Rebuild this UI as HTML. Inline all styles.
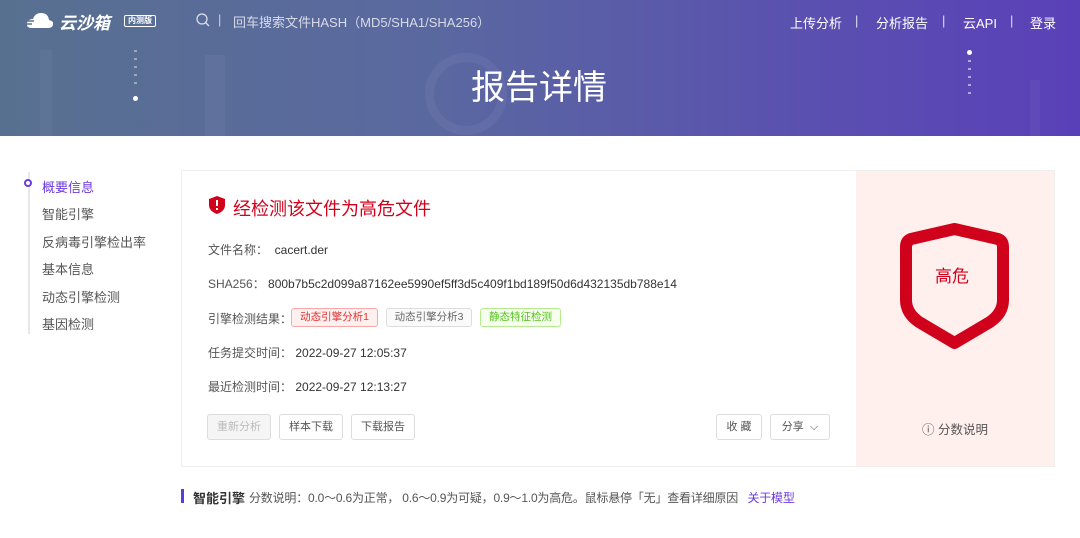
<!DOCTYPE html>
<html><head><meta charset="utf-8"><style>
*{margin:0;padding:0;box-sizing:border-box}
body{width:1080px;height:538px;background:#fff;font-family:"Liberation Sans","Noto Sans CJK SC",sans-serif;position:relative;overflow:hidden;color:#333}
.hdr{position:absolute;left:0;top:0;width:1080px;height:136px;background:linear-gradient(90deg,#587090 0%,#5a68a0 40%,#5a50b0 75%,#5a40b8 100%)}
.a{position:absolute}
.t{position:absolute;white-space:nowrap}
.nav{font-size:13px;color:#555}
.btn{position:absolute;height:26px;border:1px solid #ddd;border-radius:3px;font-size:11px;color:#555;text-align:center;line-height:24px;background:#fff}
.tag{position:absolute;height:19px;border-radius:3px;font-size:10.5px;line-height:17px;text-align:center}
.lbl{font-size:12px;color:#555}
.hn{position:absolute;top:13px;font-size:13px;color:#fff;white-space:nowrap}
</style></head><body>
<div class="hdr">
 <div class="a" style="left:40px;top:50px;width:12px;height:86px;background:rgba(255,255,255,.04)"></div>
 <div class="a" style="left:205px;top:55px;width:20px;height:81px;background:rgba(255,255,255,.04)"></div>
 <div class="a" style="left:1030px;top:80px;width:10px;height:56px;background:rgba(255,255,255,.04)"></div>
 <div class="a" style="left:425px;top:53px;width:82px;height:82px;border-radius:50%;border:9px solid rgba(255,255,255,.05)"></div>
 <div class="a" style="left:134px;top:50px;width:3px;height:40px;background:repeating-linear-gradient(#fff6 0 2px,transparent 2px 8px)"></div>
 <div class="a" style="left:133px;top:96px;width:5px;height:5px;border-radius:50%;background:#fff"></div>
 <div class="a" style="left:967px;top:50px;width:5px;height:5px;border-radius:50%;background:#fff"></div>
 <div class="a" style="left:968px;top:60px;width:3px;height:40px;background:repeating-linear-gradient(#fff8 0 2px,transparent 2px 8px)"></div>
 <svg class="a" style="left:26px;top:11px" width="28" height="18" viewBox="0 0 28 18"><path d="M6 17 Q0 17 1 12 Q2 8 7 8 Q9 2 15 2 Q22 2 23 9 Q28 10 27 14 Q26 17 22 17Z" fill="#fff"/><path d="M0 10h8M0 13h6" stroke="#587090" stroke-width="1.5"/></svg>
 <div class="t" style="left:59px;top:9px;font-size:17px;font-weight:bold;font-style:italic;color:#fff">云沙箱</div>
 <div class="t" style="left:124px;top:15px;font-size:8px;color:#fff;border:1px solid #fff;border-radius:2px;padding:0 3px;line-height:10px;font-weight:bold">内测版</div>
 <svg class="a" style="left:196px;top:13px" width="14" height="14" viewBox="0 0 14 14"><circle cx="6" cy="6" r="5" fill="none" stroke="#dde" stroke-width="1.3"/><path d="M9.5 9.5l3.5 3.5" stroke="#dde" stroke-width="1.3"/></svg>
 <div class="t" style="left:218px;top:12px;font-size:13px;color:#ccd">|</div>
 <div class="t" style="left:233px;top:12px;font-size:13px;color:#d8dae8">回车搜索文件HASH（MD5/SHA1/SHA256）</div>
 <div class="hn" style="left:790px">上传分析</div>
 <div class="hn" style="left:855px;color:#dde">|</div>
 <div class="hn" style="left:876px">分析报告</div>
 <div class="hn" style="left:942px;color:#dde">|</div>
 <div class="hn" style="left:963px">云API</div>
 <div class="hn" style="left:1010px;color:#dde">|</div>
 <div class="hn" style="left:1030px">登录</div>
 <div class="t" style="left:471px;top:60px;font-size:34px;color:#fff">报告详情</div>
</div>
<div class="a" style="left:28px;top:172px;width:2px;height:162px;background:#e8e8e8"></div>
<div class="a" style="left:24px;top:179px;width:8px;height:8px;border-radius:50%;border:2px solid #6a3be0;background:#fff"></div>
<div class="t nav" style="left:42px;top:177px;color:#6a3be0">概要信息</div>
<div class="t nav" style="left:42px;top:204px">智能引擎</div>
<div class="t nav" style="left:42px;top:232px">反病毒引擎检出率</div>
<div class="t nav" style="left:42px;top:259px">基本信息</div>
<div class="t nav" style="left:42px;top:287px">动态引擎检测</div>
<div class="t nav" style="left:42px;top:314px">基因检测</div>
<div class="a" style="left:181px;top:170px;width:874px;height:297px;border:1px solid #eee;background:#fff"></div>
<div class="a" style="left:856px;top:171px;width:198px;height:295px;background:#fff0ee"></div>
<svg class="a" style="left:209px;top:196px" width="16" height="18" viewBox="0 0 16 18"><path d="M8 0L16 3V9Q16 15 8 18Q0 15 0 9V3Z" fill="#d0021b"/><rect x="7" y="4" width="2" height="6" fill="#fff"/><rect x="7" y="12" width="2" height="2" fill="#fff"/></svg>
<div class="t" style="left:233px;top:195px;font-size:18px;color:#d0021b">经检测该文件为高危文件</div>
<div class="t lbl" style="left:208px;top:241px">文件名称：&nbsp; <span style="color:#333">cacert.der</span></div>
<div class="t lbl" style="left:208px;top:275px">SHA256：&nbsp;<span style="color:#333">800b7b5c2d099a87162ee5990ef5ff3d5c409f1bd189f50d6d432135db788e14</span></div>
<div class="t lbl" style="left:208px;top:310px">引擎检测结果：</div>
<div class="tag" style="left:291px;top:308px;width:87px;border:1px solid #f8a8a8;background:#fff0f0;color:#e03030">动态引擎分析1</div>
<div class="tag" style="left:386px;top:308px;width:86px;border:1px solid #ddd;background:#fafafa;color:#666">动态引擎分析3</div>
<div class="tag" style="left:480px;top:308px;width:81px;border:1px solid #b7eb8f;background:#f6ffed;color:#52c41a">静态特征检测</div>
<div class="t lbl" style="left:208px;top:344px">任务提交时间：&nbsp;<span style="color:#333">2022-09-27 12:05:37</span></div>
<div class="t lbl" style="left:208px;top:378px">最近检测时间：&nbsp;<span style="color:#333">2022-09-27 12:13:27</span></div>
<div class="btn" style="left:207px;top:414px;width:64px;background:#f5f5f5;color:#bbb">重新分析</div>
<div class="btn" style="left:279px;top:414px;width:64px">样本下载</div>
<div class="btn" style="left:351px;top:414px;width:64px">下载报告</div>
<div class="btn" style="left:716px;top:414px;width:46px">收 藏</div>
<div class="btn" style="left:770px;top:414px;width:60px">分享 &nbsp;⌵</div>
<svg class="a" style="left:900px;top:223px" width="109" height="128" viewBox="0 0 109 128"><path d="M54.5 6L98 16Q103 18 103 24V77Q103 90 90 99L54.5 120L19 99Q6 90 6 77V24Q6 18 11 16Z" fill="none" stroke="#d0021b" stroke-width="12" stroke-linejoin="round"/></svg>
<div class="t" style="left:935px;top:262px;font-size:17px;color:#d0021b">高危</div>
<div class="t" style="left:922px;top:419px;font-size:12.5px;color:#555">ⓘ 分数说明</div>
<div class="a" style="left:181px;top:489px;width:3px;height:14px;background:#5a3be0"></div>
<div class="t" style="left:193px;top:488px;font-size:13px;font-weight:bold;color:#333">智能引擎</div>
<div class="t" style="left:249px;top:489px;font-size:12px;color:#555;letter-spacing:-0.2px">分数说明：0.0～0.6为正常， 0.6～0.9为可疑，0.9～1.0为高危。鼠标悬停「无」查看详细原因 &nbsp; <span style="color:#6a3be0">关于模型</span></div>
</body></html>
